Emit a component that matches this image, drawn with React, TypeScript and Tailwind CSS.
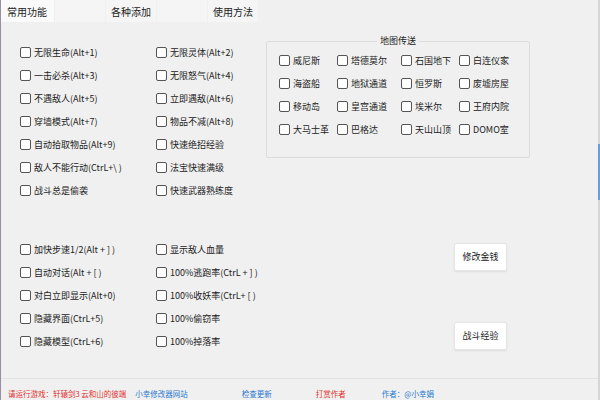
import React from "react";

const font = { fontFamily: '"Noto Sans CJK SC", "Noto Sans", sans-serif' };

const topLeft = [
  ["无限生命(Alt+1)", "无限灵体(Alt+2)"],
  ["一击必杀(Alt+3)", "无限怒气(Alt+4)"],
  ["不遇敌人(Alt+5)", "立即遇敌(Alt+6)"],
  ["穿墙模式(Alt+7)", "物品不减(Alt+8)"],
  ["自动拾取物品(Alt+9)", "快速绝招经验"],
  ["敌人不能行动(CtrL+\\ )", "法宝快速满级"],
  ["战斗总是偷袭", "快速武器熟练度"],
];

const maps = [
  ["威尼斯", "塔德莫尔", "石国地下", "白连仪家"],
  ["海盗船", "地狱通道", "恒罗斯", "废墟房屋"],
  ["移动岛", "皇宫通道", "埃米尔", "王府内院"],
  ["大马士革", "巴格达", "天山山顶", "DOMO室"],
];

const bottomLeft = [
  ["加快步速1/2(Alt + ] )", "显示敌人血量"],
  ["自动对话(Alt + [ )", "100%逃跑率(CtrL + ] )"],
  ["对白立即显示(Alt+0)", "100%收妖率(CtrL+ [ )"],
  ["隐藏界面(CtrL+5)", "100%偷窃率"],
  ["隐藏模型(CtrL+6)", "100%掉落率"],
];

const Check = ({ label }: { label: string }) => (
  <label className="flex items-center gap-[3px] h-[23px] text-[9px] text-[#222] whitespace-nowrap">
    <span className="w-[11px] h-[11px] rounded-[2px] border border-[#555] bg-white shrink-0" />
    <span>{label}</span>
  </label>
);

const Btn = ({ text }: { text: string }) => (
  <button
    type="button"
    className="w-[53px] h-[28px] bg-white border border-[#e6e6e6] rounded-[2px] shadow-[0_1px_2px_rgba(0,0,0,0.08)] text-[9px] text-[#222]"
  >
    {text}
  </button>
);

export default function App() {
  return (
    <div className="w-[600px] h-[400px] bg-[#f0f0f0] flex overflow-hidden" style={font}>
      <div className="flex-1 flex flex-col border-l border-[#9a8f9e]">
        {/* tab bar */}
        <div className="flex h-[22px] gap-[1px] text-[10px] text-[#222]">
          <div className="w-[53px] bg-[#fafafa] flex items-center pl-[6px]">常用功能</div>
          <div className="w-[50px] bg-[#f5f5f5]" />
          <div className="w-[50px] bg-[#f5f5f5] flex items-center pl-[5px]">各种添加</div>
          <div className="w-[50px] bg-[#f5f5f5]" />
          <div className="w-[50px] bg-[#f5f5f5] flex items-center pl-[5px]">使用方法</div>
        </div>

        {/* top section */}
        <div className="flex pt-[19px] pl-[19px]">
          <div className="grid grid-cols-[136px_110px]">
            {topLeft.map(([a, b]) => (
              <React.Fragment key={a}>
                <Check label={a} />
                <Check label={b} />
              </React.Fragment>
            ))}
          </div>
          <fieldset className="-mt-[6px] w-[249px] h-[123px] border border-[#dcdcdc] rounded-[2px] px-[12px] pb-[2px]">
            <legend className="mx-auto px-[3px] text-[9px] text-[#222] leading-[12px]">地图传送</legend>
            <div className="grid grid-cols-[58px_64px_58px_58px] mt-[2px]">
              {maps.map((row) =>
                row.map((m) => <Check key={m} label={m} />)
              )}
            </div>
          </fieldset>
        </div>

        {/* bottom section */}
        <div className="flex pt-[36px] pl-[19px]">
          <div className="grid grid-cols-[136px_180px]">
            {bottomLeft.map(([a, b]) => (
              <React.Fragment key={a}>
                <Check label={a} />
                <Check label={b} />
              </React.Fragment>
            ))}
          </div>
          <div className="ml-[118px] flex flex-col gap-[51px] pt-[5px]">
            <Btn text="修改金钱" />
            <Btn text="战斗经验" />
          </div>
        </div>

        {/* footer */}
        <div className="mt-auto h-[22px] border-t border-[#e2e2e2] flex items-end pb-[1px] text-[7.5px] leading-[10px]">
          <span className="ml-[7px] text-[#e0312e]">请运行游戏：轩辕剑3 云和山的彼端</span>
          <span className="ml-[9px] text-[#2a79cf]">小幸修改器网站</span>
          <span className="ml-[54px] text-[#2a79cf]">检查更新</span>
          <span className="ml-[44px] text-[#e0312e]">打赏作者</span>
          <span className="ml-[36px] text-[#2a79cf]">作者：@小幸娟</span>
        </div>
      </div>
      <div className="w-[2px] flex flex-col bg-[#d6d6d6]">
        <div className="h-[144px]" />
        <div className="h-[56px] bg-[#6b9fd4]" />
      </div>
    </div>
  );
}
